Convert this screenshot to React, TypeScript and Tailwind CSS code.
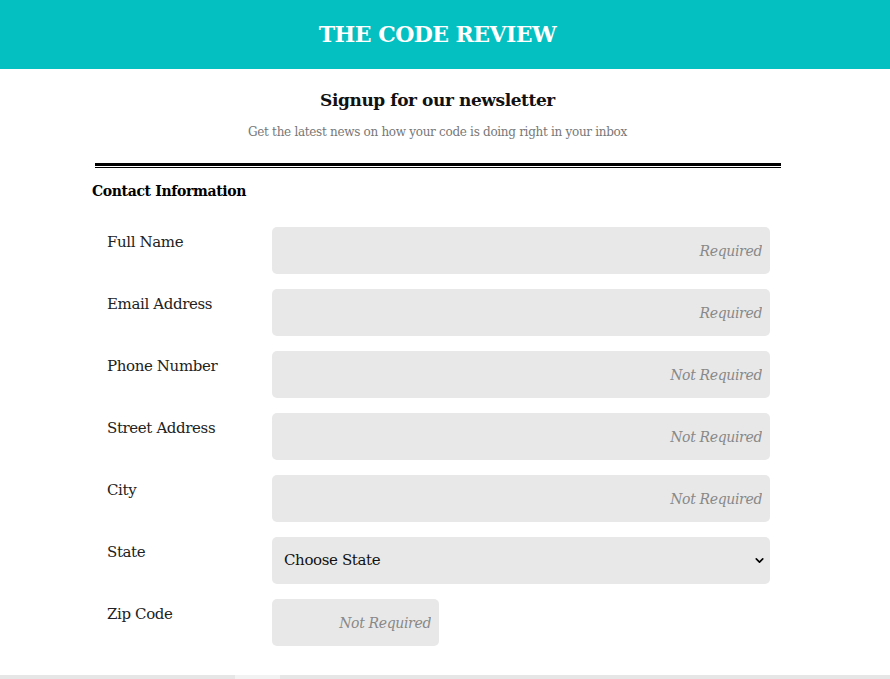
import { ChevronDown } from 'lucide-react';

const FIELDS = [
  { label: 'Full Name', hint: 'Required' },
  { label: 'Email Address', hint: 'Required' },
  { label: 'Phone Number', hint: 'Not Required' },
  { label: 'Street Address', hint: 'Not Required' },
  { label: 'City', hint: 'Not Required' },
];

const serif = { fontFamily: '"DejaVu Serif", "Liberation Serif", serif' };

export default function App() {
  return (
    <div className="min-h-[679px] bg-white flex flex-col" style={serif}>
      {/* Header */}
      <header className="h-[69px] bg-[#05c0c1] flex items-center">
        <div className="w-[875px] flex justify-center">
          <h1 className="text-[22px] font-bold text-white tracking-tight">THE CODE REVIEW</h1>
        </div>
      </header>

      <div className="w-[875px]">
        <section className="flex flex-col items-center pt-[19px]">
          <h2 className="text-[17px] font-bold text-[#111] leading-6 tracking-tight">Signup for our newsletter</h2>
          <p className="mt-[10px] text-[12px] text-[#777] leading-5 tracking-tight">
            Get the latest news on how your code is doing right in your inbox
          </p>
        </section>

        {/* Double rule */}
        <div className="mx-[95px] mt-[21px] w-[686px]">
          <div className="h-[3px] bg-black" />
          <div className="h-[1px] bg-black mt-[1px]" />
        </div>

        <form className="pl-[92px] pr-[105px]">
          <h3 className="mt-[13px] text-[14px] font-bold text-black leading-5 tracking-tight">Contact Information</h3>

          <div className="mt-[26px] flex flex-col gap-[15px]">
            {FIELDS.map(f => (
              <div key={f.label} className="flex">
                <label className="w-[180px] pl-[15px] pt-[5px] text-[15px] text-[#222] leading-5 tracking-tight">{f.label}</label>
                <input
                  placeholder={f.hint}
                  className="w-[498px] h-[47px] rounded-[5px] bg-[#e8e8e8] px-2 text-right text-[14px] italic placeholder:text-[#888] outline-none tracking-tight"
                />
              </div>
            ))}

            <div className="flex">
              <label className="w-[180px] pl-[15px] pt-[5px] text-[15px] text-[#222] leading-5 tracking-tight">State</label>
              <div className="relative w-[498px] h-[47px] rounded-[5px] bg-[#e8e8e8] flex items-center px-3">
                <span className="text-[15px] text-[#111] tracking-tight">Choose State</span>
                <ChevronDown className="absolute right-[4px] top-[17px] w-[13px] h-[13px] text-black" strokeWidth={3} />
              </div>
            </div>

            <div className="flex">
              <label className="w-[180px] pl-[15px] pt-[5px] text-[15px] text-[#222] leading-5 tracking-tight">Zip Code</label>
              <input
                placeholder="Not Required"
                className="w-[167px] h-[47px] rounded-[5px] bg-[#e8e8e8] px-2 text-right text-[14px] italic placeholder:text-[#888] outline-none tracking-tight"
              />
            </div>
          </div>
        </form>

        <div className="mt-[29px] h-[4px] flex w-[890px]">
          <div className="w-[235px] bg-[#e6e6e6]" />
          <div className="w-[45px] bg-[#f2f2f2]" />
          <div className="flex-1 bg-[#e6e6e6]" />
        </div>
      </div>
    </div>
  );
}
